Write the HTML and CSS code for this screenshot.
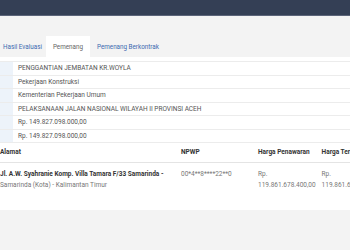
FILE: index.html
```
<!DOCTYPE html>
<html lang="id">

<head>
  <meta charset="UTF-8">
  <meta name="viewport" content="width=device-width, initial-scale=1.0">
  <link rel="stylesheet" href="styles.css">
  <title>Pemenang</title>
</head>

<body>
  <div id="topbar"></div>

  <div id="tabs">
    <span class="tab">Hasil Evaluasi</span>
    <span class="tab active">Pemenang</span>
    <span class="tab">Pemenang Berkontrak</span>
  </div>

  <div id="panel">
    <table class="info">
      <tr><td class="label"></td><td>PENGGANTIAN JEMBATAN KR.WOYLA</td></tr>
      <tr><td class="label"></td><td>Pekerjaan Konstruksi</td></tr>
      <tr><td class="label"></td><td>Kementerian Pekerjaan Umum</td></tr>
      <tr><td class="label"></td><td>PELAKSANAAN JALAN NASIONAL WILAYAH II PROVINSI ACEH</td></tr>
      <tr><td class="label"></td><td>Rp. 149.827.098.000,00</td></tr>
      <tr><td class="label"></td><td>Rp. 149.827.098.000,00</td></tr>
    </table>

    <table class="winner">
      <tr>
        <th class="col-alamat">Alamat</th>
        <th class="col-npwp">NPWP</th>
        <th class="col-harga">Harga Penawaran</th>
        <th>Harga Terkoreksi</th>
      </tr>
      <tr>
        <td><b>Jl. A.W. Syahranie Komp. Villa Tamara F/33 Samarinda -</b><br>Samarinda (Kota) - Kalimantan Timur</td>
        <td>00*4**8****22**0</td>
        <td>Rp.<br>119.861.678.400,00</td>
        <td>Rp.<br>119.861.678.400,00</td>
      </tr>
    </table>
  </div>
</body>

</html>
```

FILE: styles.css
```
body {
  margin: 0;
  font-family: Roboto, 'Liberation Sans', sans-serif;
  font-size: 6.5px;
  color: #555;
  background-color: #f3f3f3;
  overflow: hidden;
}

#topbar {
  height: 15px;
  background-color: #343f55;
  border-bottom: 1px solid #5b6479;
}

#tabs {
  display: flex;
  margin-top: 20px;
  padding-left: 3px;
  font-size: 6.3px;
  line-height: 8px;
}

.tab {
  padding: 6.5px 0;
  color: #3b6ab0;
}

.tab.active {
  background-color: white;
  color: #666;
  margin: 0 7px 0 4px;
  padding-left: 7px;
  padding-right: 7px;
}

#panel {
  background-color: white;
  padding-top: 4px;
  padding-bottom: 19px;
}

table {
  border-collapse: collapse;
  width: 100%;
  line-height: 8px;
}

.info {
  border-top: 1px solid #ececec;
}

.info td {
  height: 12.5px;
  padding: 0 0 0 5px;
  border-bottom: 1px solid #ececec;
}

.info td.label {
  width: 13px;
  padding: 0;
  background-color: #edf3fa;
}

.winner {
  width: 400px;
}

.winner th {
  text-align: left;
  color: #333;
  padding: 5px 0 6px 0;
  border-bottom: 1px solid #e4e4e4;
}

.winner td {
  vertical-align: top;
  padding: 6px 6px 0 0;
  line-height: 11px;
  color: #777;
}

.winner b {
  color: #333;
}

.col-alamat {
  width: 181px;
}

.col-npwp {
  width: 77px;
}

.col-harga {
  width: 62px;
}
```
